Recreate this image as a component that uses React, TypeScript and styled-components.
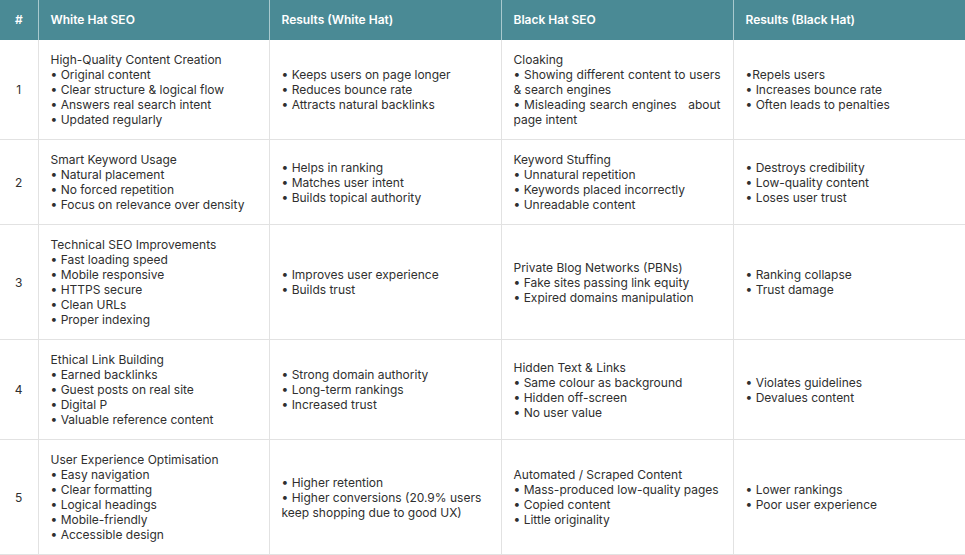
import React from "react";
import styled, { createGlobalStyle } from "styled-components";

const Global = createGlobalStyle`
  html, body { margin: 0; padding: 0; background: #ffffff; }
  body { font-family: Inter, "Noto Sans", sans-serif; }
`;

const Table = styled.table`
  width: 965px;
  border-collapse: collapse;
  table-layout: fixed;
  font-family: Inter, "Noto Sans", sans-serif;
  font-size: 12px;
  line-height: 15px;
  color: #2f2f2f;
`;

const HeadCell = styled.th<{ $center?: boolean }>`
  background: #4a8a95;
  color: #ffffff;
  font-weight: 600;
  text-align: ${(p) => (p.$center ? "center" : "left")};
  padding: 12px 12px 13px;
  border-left: 1px solid #a9c9ce;
  vertical-align: middle;
  &:first-child { border-left: none; }
`;

const Cell = styled.td<{ $center?: boolean; $justify?: boolean }>`
  padding: 12px 12px;
  vertical-align: middle;
  text-align: ${(p) => (p.$center ? "center" : p.$justify ? "justify" : "left")};
  border-left: 1px solid #e2e2e2;
  border-bottom: 1px solid #e2e2e2;
  &:first-child { border-left: none; }
  &:last-child { border-right: 1px solid #e2e2e2; }
`;

const Line = styled.div``;

type Row = {
  n: number;
  white: string[];
  whiteRes: string[];
  black: string[];
  blackRes: string[];
};

const rows: Row[] = [
  {
    n: 1,
    white: [
      "High-Quality Content Creation",
      "• Original content",
      "• Clear structure & logical flow",
      "• Answers real search intent",
      "• Updated regularly",
    ],
    whiteRes: ["• Keeps users on page longer", "• Reduces bounce rate", "• Attracts natural backlinks"],
    black: [
      "Cloaking",
      "• Showing different content to users & search engines",
      "• Misleading search engines\u00a0\u00a0 about page intent",
    ],
    blackRes: ["•Repels users", "• Increases bounce rate", "• Often leads to penalties"],
  },
  {
    n: 2,
    white: [
      "Smart Keyword Usage",
      "• Natural placement",
      "• No forced repetition",
      "• Focus on relevance over density",
    ],
    whiteRes: ["• Helps in ranking", "• Matches user intent", "• Builds topical authority"],
    black: [
      "Keyword Stuffing",
      "• Unnatural repetition",
      "• Keywords placed incorrectly",
      "• Unreadable content",
    ],
    blackRes: ["• Destroys credibility", "• Low-quality content", "• Loses user trust"],
  },
  {
    n: 3,
    white: [
      "Technical SEO Improvements",
      "• Fast loading speed",
      "• Mobile responsive",
      "• HTTPS secure",
      "• Clean URLs",
      "• Proper indexing",
    ],
    whiteRes: ["• Improves user experience", "• Builds trust"],
    black: [
      "Private Blog Networks (PBNs)",
      "• Fake sites passing link equity",
      "• Expired domains manipulation",
    ],
    blackRes: ["• Ranking collapse", "• Trust damage"],
  },
  {
    n: 4,
    white: [
      "Ethical Link Building",
      "• Earned backlinks",
      "• Guest posts on real site",
      "• Digital P",
      "• Valuable reference content",
    ],
    whiteRes: ["• Strong domain authority", "• Long-term rankings", "• Increased trust"],
    black: [
      "Hidden Text & Links",
      "• Same colour as background",
      "• Hidden off-screen",
      "• No user value",
    ],
    blackRes: ["• Violates guidelines", "• Devalues content"],
  },
  {
    n: 5,
    white: [
      "User Experience Optimisation",
      "• Easy navigation",
      "• Clear formatting",
      "• Logical headings",
      "• Mobile-friendly",
      "• Accessible design",
    ],
    whiteRes: [
      "• Higher retention",
      "• Higher conversions (20.9% users keep shopping due to good UX)",
    ],
    black: [
      "Automated / Scraped Content",
      "• Mass-produced low-quality pages",
      "• Copied content",
      "• Little originality",
    ],
    blackRes: ["• Lower rankings", "• Poor user experience"],
  },
];

const Lines = ({ items }: { items: string[] }) => (
  <>
    {items.map((t, i) => (
      <Line key={i}>{t}</Line>
    ))}
  </>
);

export default function App() {
  return (
    <>
      <Global />
      <Table>
        <colgroup>
          <col style={{ width: 38 }} />
          <col style={{ width: 231 }} />
          <col style={{ width: 232 }} />
          <col style={{ width: 232 }} />
          <col style={{ width: 232 }} />
        </colgroup>
        <thead>
          <tr>
            <HeadCell $center>#</HeadCell>
            <HeadCell>White Hat SEO</HeadCell>
            <HeadCell>Results (White Hat)</HeadCell>
            <HeadCell>Black Hat SEO</HeadCell>
            <HeadCell>Results (Black Hat)</HeadCell>
          </tr>
        </thead>
        <tbody>
          {rows.map((r) => (
            <tr key={r.n}>
              <Cell $center>{r.n}</Cell>
              <Cell>
                <Lines items={r.white} />
              </Cell>
              <Cell>
                <Lines items={r.whiteRes} />
              </Cell>
              <Cell $justify>
                <Lines items={r.black} />
              </Cell>
              <Cell>
                <Lines items={r.blackRes} />
              </Cell>
            </tr>
          ))}
        </tbody>
      </Table>
    </>
  );
}
